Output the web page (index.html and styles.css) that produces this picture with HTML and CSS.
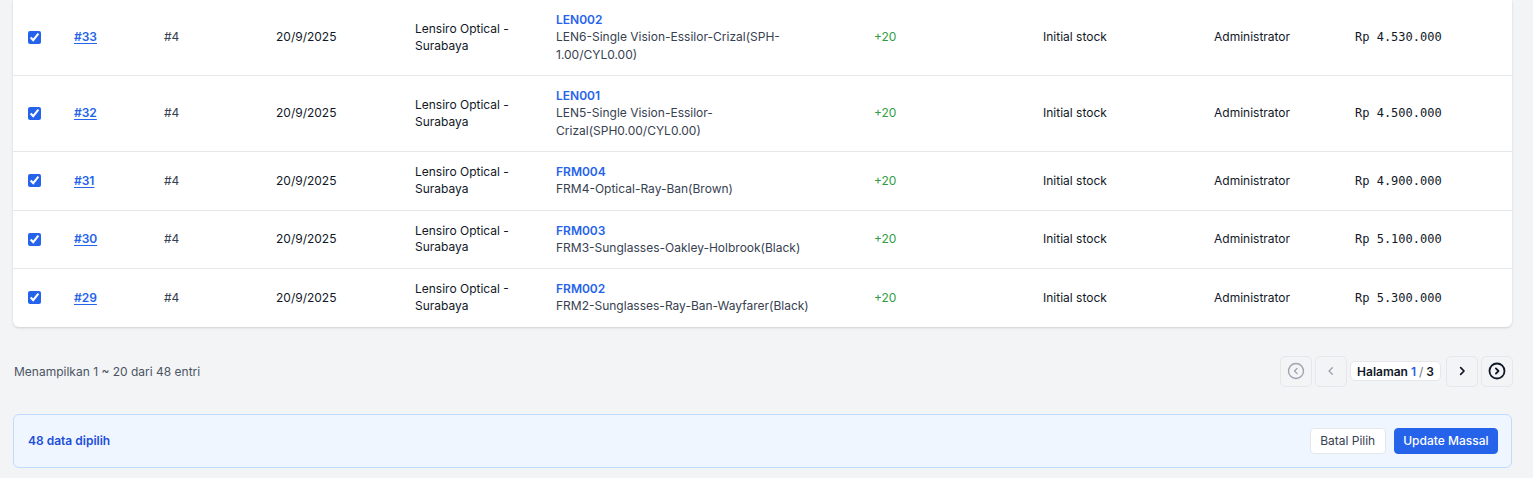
FILE: index.html
```html
<!DOCTYPE html>
<html lang="id">
<head>
<meta charset="utf-8">
<title>Stok</title>
<link rel="stylesheet" href="styles.css">
</head>
<body>
<div class="page">
  <div class="card">
    <table class="tbl">
      <colgroup>
        <col class="c1"><col class="c2"><col class="c3"><col class="c4"><col class="c5"><col class="c6"><col class="c7"><col class="c8"><col class="c9"><col class="c10">
      </colgroup>
      <tbody>
        <tr>
          <td><input type="checkbox" class="chk" checked></td>
          <td><a class="id" href="#">#33</a></td>
          <td class="muted">#4</td>
          <td class="dark">20/9/2025</td>
          <td class="dark">Lensiro Optical - Surabaya</td>
          <td><div class="prod"><div class="code">LEN002</div><div class="desc">LEN6-Single Vision-Essilor-Crizal(SPH-1.00/CYL0.00)</div></div></td>
          <td class="qty">+20</td>
          <td class="dark">Initial stock</td>
          <td class="dark">Administrator</td>
          <td class="price">Rp 4.530.000</td>
        </tr>
        <tr>
          <td><input type="checkbox" class="chk" checked></td>
          <td><a class="id" href="#">#32</a></td>
          <td class="muted">#4</td>
          <td class="dark">20/9/2025</td>
          <td class="dark">Lensiro Optical - Surabaya</td>
          <td><div class="prod"><div class="code">LEN001</div><div class="desc">LEN5-Single Vision-Essilor-Crizal(SPH0.00/CYL0.00)</div></div></td>
          <td class="qty">+20</td>
          <td class="dark">Initial stock</td>
          <td class="dark">Administrator</td>
          <td class="price">Rp 4.500.000</td>
        </tr>
        <tr>
          <td><input type="checkbox" class="chk" checked></td>
          <td><a class="id" href="#">#31</a></td>
          <td class="muted">#4</td>
          <td class="dark">20/9/2025</td>
          <td class="dark">Lensiro Optical - Surabaya</td>
          <td><div class="prod"><div class="code">FRM004</div><div class="desc">FRM4-Optical-Ray-Ban(Brown)</div></div></td>
          <td class="qty">+20</td>
          <td class="dark">Initial stock</td>
          <td class="dark">Administrator</td>
          <td class="price">Rp 4.900.000</td>
        </tr>
        <tr>
          <td><input type="checkbox" class="chk" checked></td>
          <td><a class="id" href="#">#30</a></td>
          <td class="muted">#4</td>
          <td class="dark">20/9/2025</td>
          <td class="dark">Lensiro Optical - Surabaya</td>
          <td><div class="prod"><div class="code">FRM003</div><div class="desc">FRM3-Sunglasses-Oakley-Holbrook(Black)</div></div></td>
          <td class="qty">+20</td>
          <td class="dark">Initial stock</td>
          <td class="dark">Administrator</td>
          <td class="price">Rp 5.100.000</td>
        </tr>
        <tr>
          <td><input type="checkbox" class="chk" checked></td>
          <td><a class="id" href="#">#29</a></td>
          <td class="muted">#4</td>
          <td class="dark">20/9/2025</td>
          <td class="dark">Lensiro Optical - Surabaya</td>
          <td><div class="prod"><div class="code">FRM002</div><div class="desc">FRM2-Sunglasses-Ray-Ban-Wayfarer(Black)</div></div></td>
          <td class="qty">+20</td>
          <td class="dark">Initial stock</td>
          <td class="dark">Administrator</td>
          <td class="price">Rp 5.300.000</td>
        </tr>
      </tbody>
    </table>
  </div>

  <div class="footer">
    <div class="info">Menampilkan 1 ~ 20 dari 48 entri</div>
    <div class="pager">
      <button class="pbtn disabled" aria-label="Pertama">
        <svg width="18" height="18" viewBox="0 0 24 24" fill="none" stroke="currentColor" stroke-width="1.8" stroke-linecap="round" stroke-linejoin="round"><circle cx="12" cy="12" r="10"/><path d="M13.5 8.5l-3.5 3.5 3.5 3.5"/></svg>
      </button>
      <button class="pbtn disabled" aria-label="Sebelumnya">
        <svg width="16" height="16" viewBox="0 0 24 24" fill="none" stroke="currentColor" stroke-width="2" stroke-linecap="round" stroke-linejoin="round"><path d="M14 7l-5 5 5 5"/></svg>
      </button>
      <div class="plabel">Halaman <span class="cur">1</span> <span class="sep">/</span> 3</div>
      <button class="pbtn" aria-label="Berikutnya">
        <svg width="16" height="16" viewBox="0 0 24 24" fill="none" stroke="currentColor" stroke-width="2.6" stroke-linecap="round" stroke-linejoin="round"><path d="M10 7l5 5-5 5"/></svg>
      </button>
      <button class="pbtn" aria-label="Terakhir">
        <svg width="18" height="18" viewBox="0 0 24 24" fill="none" stroke="currentColor" stroke-width="2.4" stroke-linecap="round" stroke-linejoin="round"><circle cx="12" cy="12" r="10"/><path d="M10.5 8.5l3.5 3.5-3.5 3.5"/></svg>
      </button>
    </div>
  </div>

  <div class="bulk">
    <div class="count">48 data dipilih</div>
    <div class="actions">
      <button class="btn ghost">Batal Pilih</button>
      <button class="btn primary">Update Massal</button>
    </div>
  </div>
</div>
</body>
</html>
```

FILE: styles.css
```css
* { box-sizing: border-box; }

html, body {
  margin: 0;
  padding: 0;
  background: #f3f4f6;
  font-family: Inter, "Noto Sans", Arial, sans-serif;
  color: #111827;
}

.page {
  width: 1499px;
  margin-left: 13px;
}

.card {
  background: #ffffff;
  border-radius: 0 0 6px 6px;
  box-shadow: 0 1px 3px rgba(0, 0, 0, 0.10), 0 1px 2px rgba(0, 0, 0, 0.06);
  overflow: hidden;
}

.tbl {
  width: 100%;
  border-collapse: collapse;
  table-layout: fixed;
  font-size: 12px;
}

.c1 { width: 46px; }
.c2 { width: 90px; }
.c3 { width: 112px; }
.c4 { width: 139px; }
.c5 { width: 141px; }
.c6 { width: 318px; }
.c7 { width: 169px; }
.c8 { width: 171px; }
.c9 { width: 141px; }
.c10 { width: 172px; }

.tbl td {
  padding: 12px 15px;
  vertical-align: middle;
  line-height: 16.5px;
  border-bottom: 1px solid #e5e7eb;
}

.tbl tr:last-child td { border-bottom: none; }

.chk {
  width: 13px;
  height: 13px;
  margin: 0;
  display: block;
  accent-color: #2563eb;
}

.id {
  color: #2563eb;
  font-weight: 600;
  text-decoration: underline;
  text-underline-offset: 2px;
}

.muted { color: #374151; }
.dark { color: #111827; }

.prod { max-width: 282px; }

.code {
  color: #2563eb;
  font-weight: 600;
  line-height: 16px;
}

.desc {
  color: #374151;
  line-height: 17.5px;
}

.qty { color: #2f9e44; }

.price {
  font-family: "DejaVu Sans Mono", "Liberation Mono", monospace;
  font-size: 12px;
  color: #111827;
}

.footer {
  margin-top: 29px;
  display: flex;
  align-items: center;
  justify-content: space-between;
  height: 31px;
}

.info {
  font-size: 12px;
  color: #4b5563;
  padding-left: 1px;
}

.pager {
  display: flex;
  align-items: center;
  gap: 3px;
  margin-right: -1px;
}

.pbtn {
  width: 32px;
  height: 31px;
  border: 1px solid #e5e7eb;
  border-radius: 5px;
  background: #f3f4f6;
  color: #111827;
  display: flex;
  align-items: center;
  justify-content: center;
  padding: 0;
}

.pbtn.disabled { color: #9ca3af; }

.plabel {
  height: 20px;
  padding: 0 6px;
  margin: 0 2px 0 0;
  background: #ffffff;
  border: 1px solid #e5e7eb;
  border-radius: 5px;
  font-size: 12px;
  font-weight: 600;
  color: #111827;
  display: flex;
  align-items: center;
  gap: 3px;
}

.cur { color: #2563eb; }
.sep { color: #6b7280; font-weight: 400; }

.bulk {
  margin-top: 27px;
  height: 54px;
  background: #eff6ff;
  border: 1px solid #bfdbfe;
  border-radius: 6px;
  display: flex;
  align-items: center;
  justify-content: space-between;
  padding: 0 13px 0 14px;
}

.count {
  font-size: 12px;
  font-weight: 600;
  color: #1d4ed8;
}

.actions {
  display: flex;
  gap: 8px;
}

.btn {
  height: 26px;
  border-radius: 4px;
  font-family: Inter, "Noto Sans", Arial, sans-serif;
  font-size: 12px;
  cursor: pointer;
}

.ghost {
  padding: 0 9.5px;
  background: #ffffff;
  border: 1px solid #e5e7eb;
  color: #374151;
}

.primary {
  padding: 0 8.5px;
  background: #2563eb;
  border: 1px solid #2563eb;
  color: #ffffff;
  font-weight: 500;
}
```
